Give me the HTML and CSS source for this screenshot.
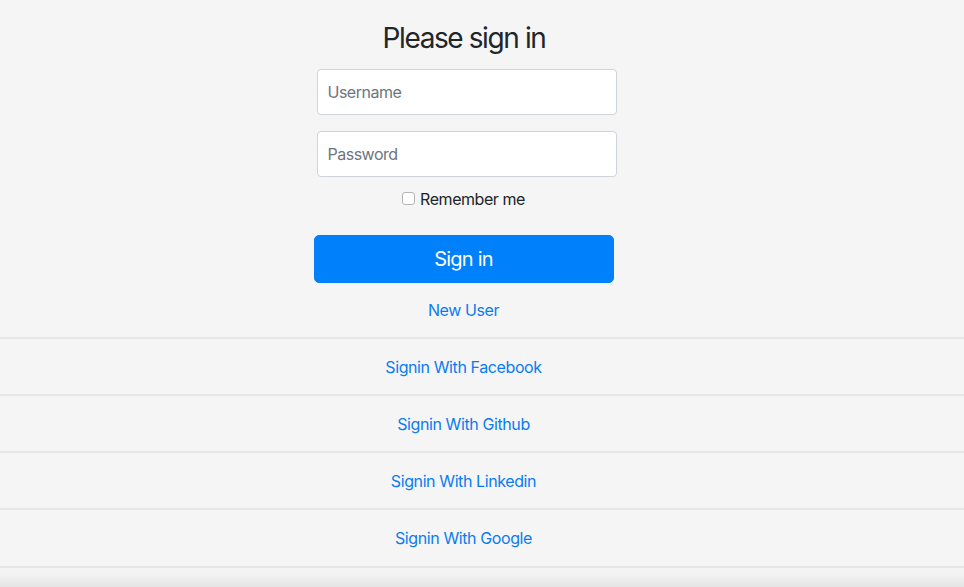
FILE: index.html
```html
<!DOCTYPE html>
<html lang="en">
<head>
<meta charset="utf-8">
<title>Please sign in</title>
<link rel="stylesheet" href="styles.css">
</head>
<body>
<main class="page">
  <form class="form-signin">
    <h1 class="title">Please sign in</h1>
    <div class="fields">
      <input class="field" type="text" placeholder="Username">
      <input class="field" type="password" placeholder="Password">
    </div>
    <label class="remember"><input class="check" type="checkbox"><span>Remember me</span></label>
    <button class="btn-signin" type="button">Sign in</button>
    <a class="link new-user" href="#">New User</a>
  </form>
  <ul class="providers">
    <li class="provider"><a class="link" href="#">Signin With Facebook</a></li>
    <li class="provider"><a class="link" href="#">Signin With Github</a></li>
    <li class="provider"><a class="link" href="#">Signin With Linkedin</a></li>
    <li class="provider"><a class="link" href="#">Signin With Google</a></li>
    <li class="provider provider-end"></li>
  </ul>
</main>
</body>
</html>
```

FILE: styles.css
```css
html, body {
  margin: 0;
  padding: 0;
  height: 100%;
}

body {
  background: #f5f5f5;
  font-family: Inter, "Noto Sans", "Liberation Sans", sans-serif;
  font-size: 16px;
  line-height: 1.5;
  color: #212529;
  overflow: hidden;
}

.page {
  display: flex;
  flex-direction: column;
}

.form-signin {
  display: flex;
  flex-direction: column;
  align-items: center;
  padding: 22px 37px 0 0;
}

.title {
  margin: 0 0 13px;
  font-size: 28px;
  font-weight: 400;
  line-height: 1.2;
  letter-spacing: -1.4px;
  padding-left: 1px;
}

.fields {
  display: flex;
  flex-direction: column;
  gap: 16px;
  margin-left: 6px;
}

.field {
  box-sizing: border-box;
  width: 300px;
  height: 46px;
  padding: 10px;
  font-family: inherit;
  font-size: 16px;
  line-height: 1.5;
  letter-spacing: -0.5px;
  color: #495057;
  background: #fff;
  border: 1px solid #ced4da;
  border-radius: 4px;
  outline: none;
}

.field::placeholder {
  color: #6c757d;
  opacity: 1;
}

.remember {
  display: flex;
  align-items: center;
  margin-top: 10px;
  line-height: 24px;
  color: #212529;
  letter-spacing: -0.45px;
}

.check {
  appearance: none;
  -webkit-appearance: none;
  box-sizing: border-box;
  width: 13px;
  height: 13px;
  margin: 0 5px 0 0;
  border: 1px solid #b5b5b5;
  border-radius: 3px;
  background: #fff;
}

.btn-signin {
  box-sizing: border-box;
  width: 300px;
  height: 48px;
  margin-top: 24px;
  padding: 8px 16px;
  font-family: inherit;
  font-size: 20px;
  line-height: 1.5;
  color: #fff;
  background: #0080fb;
  border: 1px solid #0080fb;
  border-radius: 5px;
  letter-spacing: -0.8px;
}

.link {
  color: #0a7cf0;
  text-decoration: none;
  line-height: 24px;
  letter-spacing: -0.4px;
}

.new-user {
  margin: 15px 0 15px;
}

.providers {
  list-style: none;
  margin: 0;
  padding: 0;
}

.provider {
  display: flex;
  justify-content: center;
  padding: 16px 37px 15px 0;
  border-top: 2px solid #e6e6e6;
}

.provider-end {
  height: 20px;
  padding: 0;
  margin-top: 1px;
  border-top: 2px solid #e6e6e6;
  background: linear-gradient(to bottom, #f5f5f5 0%, #f1f1f1 40%, #e3e3e3 100%);
}
```
